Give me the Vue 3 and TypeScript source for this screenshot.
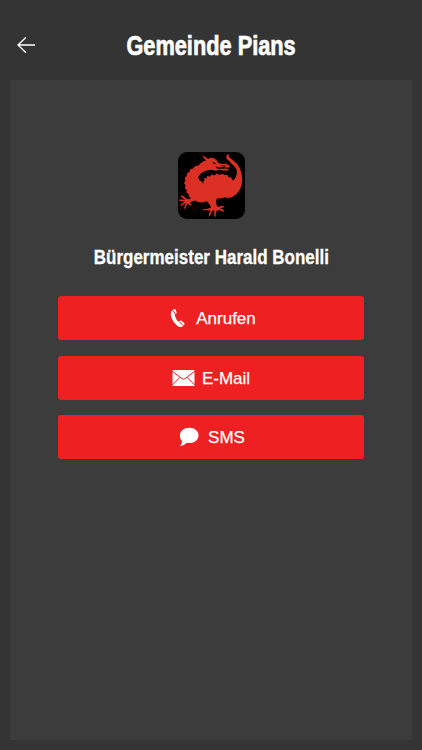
<template>
  <div class="screen">
    <header class="header">
      <button class="back" type="button" aria-label="Zurück">
        <svg viewBox="0 0 18 18" width="18" height="18">
          <path d="M9 1.2L1 9l8 7.8M1 9h17" />
        </svg>
      </button>
      <h1 class="title"><span>{{ title }}</span></h1>
    </header>

    <main class="panel">
      <div class="logo">
        <svg viewBox="2 2 200 200" width="67" height="67">
          <path
            class="dragon"
            d="M73 12L84 17L92 23L97 19L110 21L118 27L122 35L134 38L146 37L155 42L157 47L151 49L136 47L126 48L118 45L114 48L120 52L132 52L144 51L155 53L150 57L136 57L126 55L115 58L100 55L87 57L76 62L67 69L62 78L66 86L72 90L79 97L77 89L82 86L79 80L88 80L89 74L98 75L102 69L111 72L118 66L126 71L134 67L141 71L149 70L153 77L162 78L163 85L167 87L174 78L178 66L177 55L171 45L162 37L154 28L147 22L146 15L149 10L155 8L153 14L158 21L167 27L178 37L187 51L192 67L194 85L191 103L185 117L176 128L164 136L151 139L142 137L130 141L119 140L115 148L117 160L121 166L131 163L140 164L138 168L127 170L137 174L140 180L133 179L126 175L117 177L115 187L114 197L110 192L111 178L107 176L101 182L99 190L94 195L95 185L100 177L89 176L76 176L75 173L88 172L101 168L96 158L88 149L76 153L64 152L52 147L44 149L38 154L43 160L37 162L32 156L26 163L24 172L20 170L23 160L27 154L19 157L13 163L9 161L16 154L23 150L14 149L6 148L6 144L15 144L24 145L16 140L10 134L13 131L20 135L28 142L35 143L41 140L34 134L34 127L27 123L28 115L22 110L25 102L20 95L24 87L22 79L28 74L28 66L36 62L38 54L47 51L53 44L62 43L69 36L79 29L86 27L79 20Z"
          />
          <path class="detail" d="M103 33l9 1 5 4-8-1zM127 42l12 0 8 2-9 1z" />
        </svg>
      </div>
      <h2 class="name"><span>{{ person }}</span></h2>

      <div class="actions">
        <button
          v-for="action in actions"
          :key="action.icon"
          class="action"
          :class="action.icon"
          type="button"
        >
          <svg v-if="action.icon === 'phone'" viewBox="0 0 16 20" width="16" height="20">
            <path
              d="M1.2 3.2L4.2 1.1Q5 .7 5.5 1.5L6.7 4.4Q6.8 5.2 6.1 5.6L4.9 6.3Q4.6 9.4 8 13.4L9.6 13.2L10.3 12.6Q10.9 12.3 11.5 12.8L14.4 15.2Q15 15.9 14.3 16.5L12 18.7Q9.7 19.7 6.9 17.4Q3.3 14.4 1.7 10.5Q.1 6.5 1.2 3.2Z"
            />
            <path class="groove" d="M3.2 2.4l1.9 3.8M9.4 13.6l3.2 3.6" />
          </svg>
          <svg v-else-if="action.icon === 'mail'" viewBox="0 0 23 16" width="23" height="16">
            <path d="M.5 0h22v16H.5z" />
            <path class="groove" d="M0 1l10 7.7q1.5 1 3 0L23 1M0 15.3l8-8M23 15.3l-8-8" />
          </svg>
          <svg v-else viewBox="0 0 20 20" width="20" height="20">
            <path
              d="M10.4.8C15.7.8 19.5 4 19.5 8.4C19.5 12.8 15.6 16 10.4 16L7.9 15.8Q5 18.8 1.1 19.2Q2.8 17.4 3 14.1Q.9 11.9.9 8.4C.9 4 5 .8 10.4.8Z"
            />
          </svg>
          <span>{{ action.label }}</span>
        </button>
      </div>
    </main>
  </div>
</template>

<script setup lang="ts">
type Action = {
  icon: 'phone' | 'mail' | 'sms'
  label: string
};

const title = 'Gemeinde Pians'
const person = 'Bürgermeister Harald Bonelli'

const actions: Action[] = [
  { icon: 'phone', label: 'Anrufen' },
  { icon: 'mail', label: 'E-Mail' },
  { icon: 'sms', label: 'SMS' },
]
</script>

<style>
body {
  background-color: #343434;
}
</style>

<style scoped>
.screen {
  box-sizing: border-box;
  display: flex;
  flex-direction: column;
  width: 100%;
  height: 100vh;
  padding: 0 10px 10px;
  background-color: #343434;
  color: #ffffff;
  font-family: "Liberation Sans", Arial, sans-serif;
}

.header {
  display: grid;
  grid-template-columns: 32px 1fr 32px;
  align-items: center;
  height: 80px;
  padding-top: 12px;
  box-sizing: border-box;
}

.back {
  display: flex;
  padding: 0 0 0 7px;
  margin-top: -3px;
  border: 0;
  background: none;
}

.back path {
  fill: none;
  stroke: #ffffff;
  stroke-width: 1.3;
}

.title,
.name {
  display: flex;
  justify-content: center;
  margin: 0;
  white-space: nowrap;
}

.title {
  font-size: 27px;
  line-height: 32px;
  -webkit-text-stroke: .7px #ffffff;
}

/* condensed headline look */
.title span {
  transform: scaleX(.806);
}

.panel {
  flex: 1;
  display: flex;
  flex-direction: column;
  align-items: center;
  padding-top: 72px;
  background-color: #3c3c3c;
}

.logo {
  width: 67px;
  height: 67px;
  border-radius: 9px;
  overflow: hidden;
  background-color: #000000;
}

.logo svg {
  display: block;
}

.dragon {
  fill: #dc3024;
}

.detail {
  fill: #000000;
}

.name {
  margin-top: 26px;
  font-size: 20px;
  line-height: 24px;
  -webkit-text-stroke: .3px #ffffff;
}

.name span {
  transform: scaleX(.85);
}

.actions {
  display: flex;
  flex-direction: column;
  gap: 15.5px;
  width: 306px;
  margin-top: 27px;
}

.action {
  display: flex;
  align-items: center;
  justify-content: center;
  height: 44px;
  padding: 0;
  border: 0;
  border-radius: 3px;
  background-color: #ef2021;
  color: #ffffff;
  font: 17px "Liberation Sans", Arial, sans-serif;
  -webkit-text-stroke: .25px #ffffff;
}

.action span {
  padding-top: 2px;
}

.action svg {
  fill: #ffffff;
  margin-right: 8px;
}

.action .groove {
  fill: none;
  stroke: #ef2021;
  stroke-width: 1;
}

.action.phone {
  padding-left: 4px;
}

.phone svg {
  margin-right: 10px;
  margin-top: -1px;
}

.mail svg {
  margin-right: 7px;
}

.action.sms {
  padding-left: 2px;
}

.sms svg {
  margin-right: 9px;
}
</style>
